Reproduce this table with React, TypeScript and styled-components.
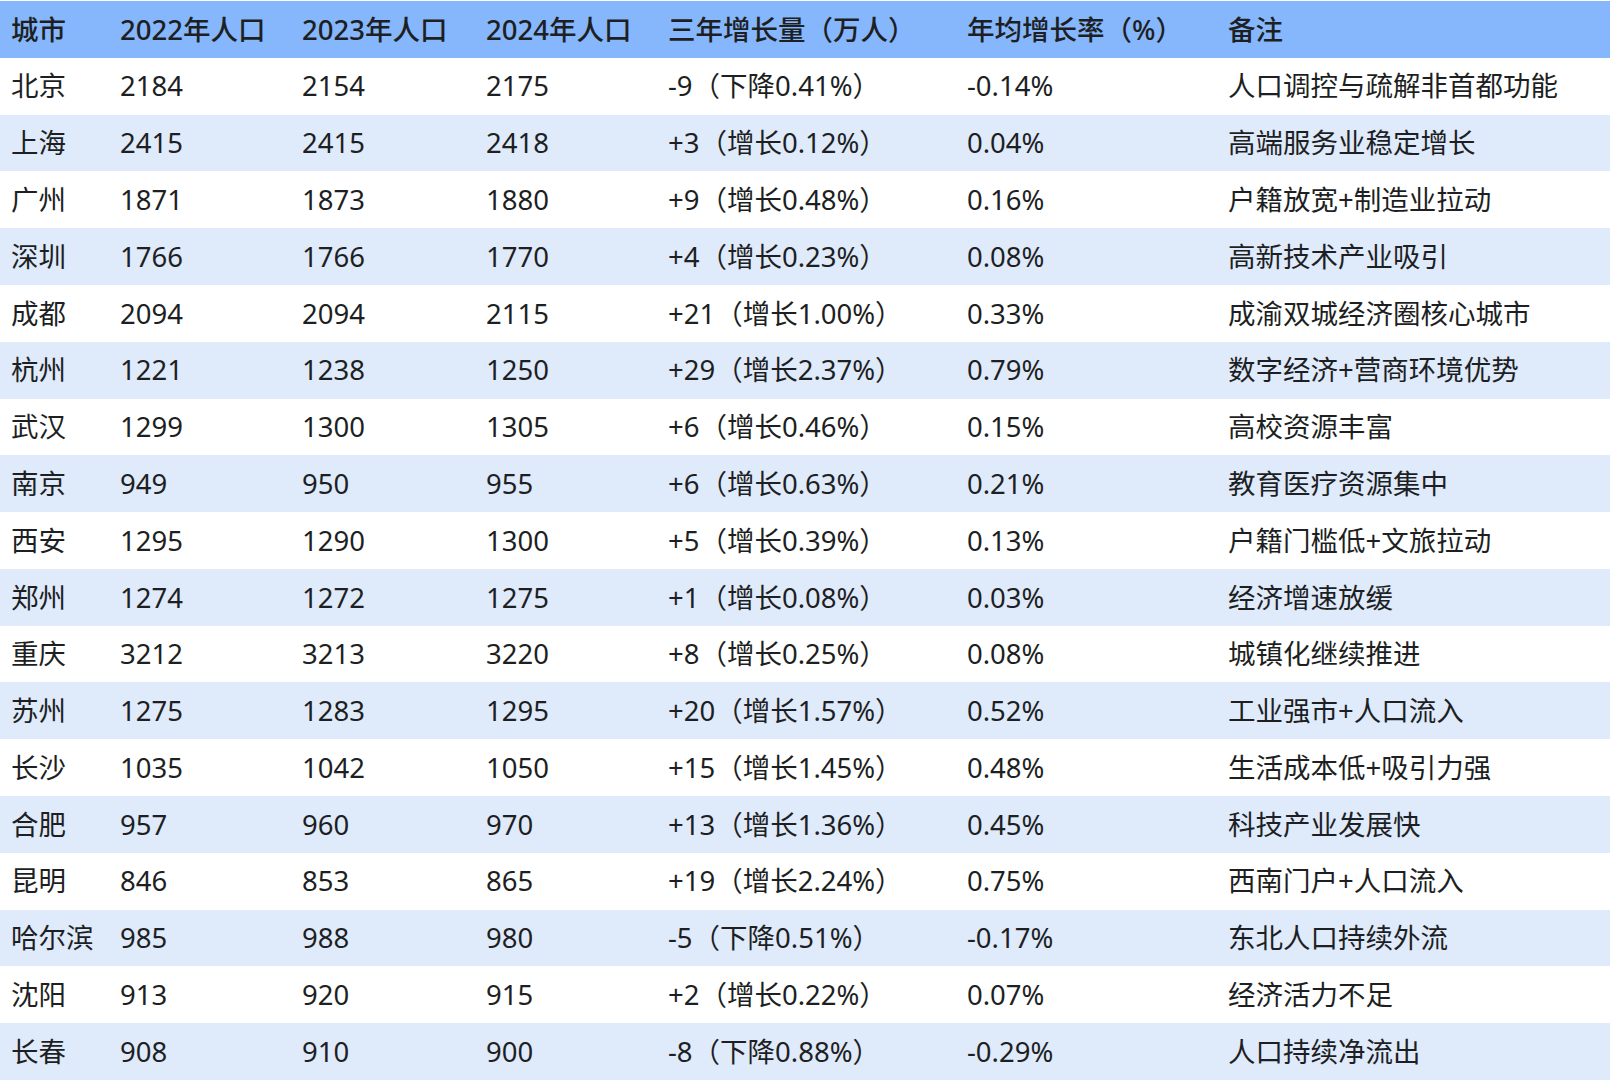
import { createGlobalStyle, styled } from "styled-components";

const GlobalStyle = createGlobalStyle`
  html, body {
    margin: 0;
    padding: 0;
    background: #ffffff;
  }
  body {
    font-family: "Noto Sans", "Noto Sans CJK SC", sans-serif;
    color: #1d1f23;
  }
`;

type CityRow = {
  city: string;
  y2022: string;
  y2023: string;
  y2024: string;
  growth: string;
  rate: string;
  note: string;
};

const rows: CityRow[] = [
  { city: "北京", y2022: "2184", y2023: "2154", y2024: "2175", growth: "-9（下降0.41%）", rate: "-0.14%", note: "人口调控与疏解非首都功能" },
  { city: "上海", y2022: "2415", y2023: "2415", y2024: "2418", growth: "+3（增长0.12%）", rate: "0.04%", note: "高端服务业稳定增长" },
  { city: "广州", y2022: "1871", y2023: "1873", y2024: "1880", growth: "+9（增长0.48%）", rate: "0.16%", note: "户籍放宽+制造业拉动" },
  { city: "深圳", y2022: "1766", y2023: "1766", y2024: "1770", growth: "+4（增长0.23%）", rate: "0.08%", note: "高新技术产业吸引" },
  { city: "成都", y2022: "2094", y2023: "2094", y2024: "2115", growth: "+21（增长1.00%）", rate: "0.33%", note: "成渝双城经济圈核心城市" },
  { city: "杭州", y2022: "1221", y2023: "1238", y2024: "1250", growth: "+29（增长2.37%）", rate: "0.79%", note: "数字经济+营商环境优势" },
  { city: "武汉", y2022: "1299", y2023: "1300", y2024: "1305", growth: "+6（增长0.46%）", rate: "0.15%", note: "高校资源丰富" },
  { city: "南京", y2022: "949", y2023: "950", y2024: "955", growth: "+6（增长0.63%）", rate: "0.21%", note: "教育医疗资源集中" },
  { city: "西安", y2022: "1295", y2023: "1290", y2024: "1300", growth: "+5（增长0.39%）", rate: "0.13%", note: "户籍门槛低+文旅拉动" },
  { city: "郑州", y2022: "1274", y2023: "1272", y2024: "1275", growth: "+1（增长0.08%）", rate: "0.03%", note: "经济增速放缓" },
  { city: "重庆", y2022: "3212", y2023: "3213", y2024: "3220", growth: "+8（增长0.25%）", rate: "0.08%", note: "城镇化继续推进" },
  { city: "苏州", y2022: "1275", y2023: "1283", y2024: "1295", growth: "+20（增长1.57%）", rate: "0.52%", note: "工业强市+人口流入" },
  { city: "长沙", y2022: "1035", y2023: "1042", y2024: "1050", growth: "+15（增长1.45%）", rate: "0.48%", note: "生活成本低+吸引力强" },
  { city: "合肥", y2022: "957", y2023: "960", y2024: "970", growth: "+13（增长1.36%）", rate: "0.45%", note: "科技产业发展快" },
  { city: "昆明", y2022: "846", y2023: "853", y2024: "865", growth: "+19（增长2.24%）", rate: "0.75%", note: "西南门户+人口流入" },
  { city: "哈尔滨", y2022: "985", y2023: "988", y2024: "980", growth: "-5（下降0.51%）", rate: "-0.17%", note: "东北人口持续外流" },
  { city: "沈阳", y2022: "913", y2023: "920", y2024: "915", growth: "+2（增长0.22%）", rate: "0.07%", note: "经济活力不足" },
  { city: "长春", y2022: "908", y2023: "910", y2024: "900", growth: "-8（下降0.88%）", rate: "-0.29%", note: "人口持续净流出" },
];

const headers = ["城市", "2022年人口", "2023年人口", "2024年人口", "三年增长量（万人）", "年均增长率（%）", "备注"];

const Table = styled.div`
  display: grid;
  grid-template-rows: repeat(19, 1fr);
  height: 1080px;
  width: 1610px;
  padding-top: 1px;
  box-sizing: border-box;
`;

const Row = styled.div<{ $variant: "head" | "odd" | "even" }>`
  display: grid;
  grid-template-columns: 109px 182px 184px 182px 299px 261px 1fr;
  align-items: center;
  background: ${(p) =>
    p.$variant === "head" ? "#86b6fb" : p.$variant === "even" ? "#dfeafb" : "#ffffff"};
  font-weight: ${(p) => (p.$variant === "head" ? 500 : 400)};
`;

const Cell = styled.div`
  padding-left: 11px;
  font-size: 27.5px;
  line-height: 1;
  white-space: nowrap;
`;

export default function App() {
  return (
    <>
      <GlobalStyle />
      <Table>
        <Row $variant="head">
          {headers.map((h) => (
            <Cell key={h}>{h}</Cell>
          ))}
        </Row>
        {rows.map((r, i) => (
          <Row key={r.city} $variant={i % 2 === 0 ? "odd" : "even"}>
            <Cell>{r.city}</Cell>
            <Cell>{r.y2022}</Cell>
            <Cell>{r.y2023}</Cell>
            <Cell>{r.y2024}</Cell>
            <Cell>{r.growth}</Cell>
            <Cell>{r.rate}</Cell>
            <Cell>{r.note}</Cell>
          </Row>
        ))}
      </Table>
    </>
  );
}
